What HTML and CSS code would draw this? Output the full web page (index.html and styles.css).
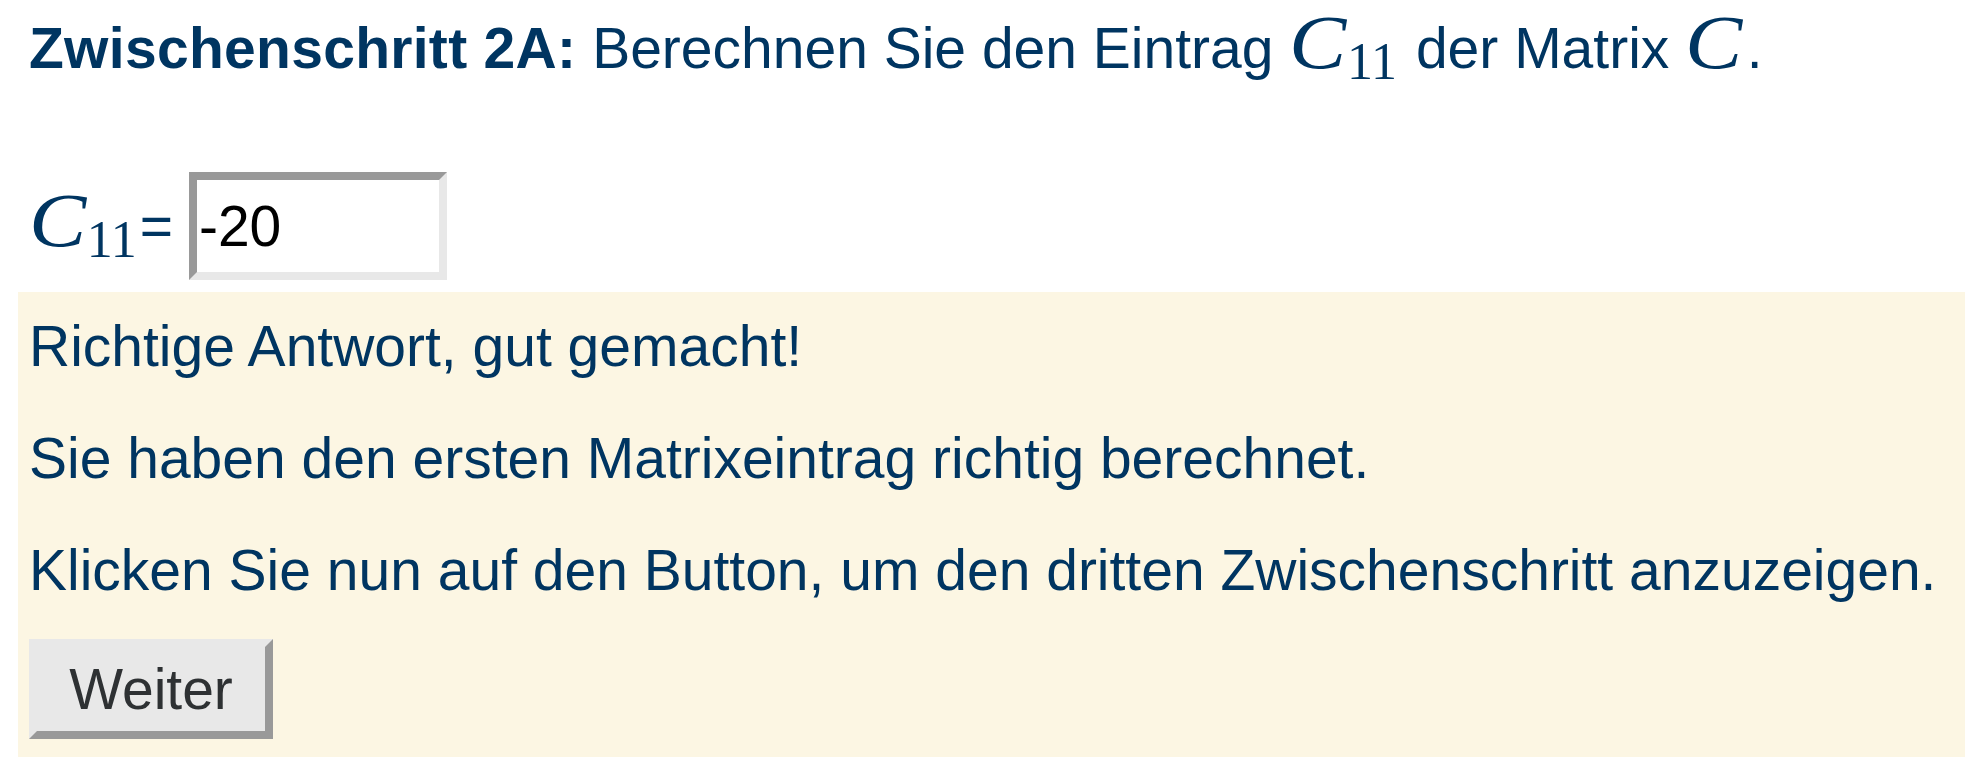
FILE: index.html
```html
<!DOCTYPE html>
<html lang="de">
<head>
<meta charset="utf-8">
<title>Zwischenschritt 2A</title>
<link rel="stylesheet" href="styles.css">
</head>
<body>
<div class="page">
  <div class="title"><b class="label">Zwischenschritt 2A:</b> Berechnen Sie den Eintrag <span class="math"><i class="mi">C</i><span class="msub msub-inline">11</span></span> der Matrix <span class="math"><i class="mi mi-end">C</i></span>.</div>
  <div class="answer-row"><span class="math"><i class="mi">C</i><span class="msub">11</span></span><span class="eq">=</span> <input class="field" type="text" value="-20"></div>
  <div class="feedback">
    <p class="msg">Richtige Antwort, gut gemacht!</p>
    <p class="msg">Sie haben den ersten Matrixeintrag richtig berechnet.</p>
    <p class="msg">Klicken Sie nun auf den Button, um den dritten Zwischenschritt anzuzeigen.</p>
    <button class="btn" type="button">Weiter</button>
  </div>
</div>
</body>
</html>
```

FILE: styles.css
```css
html, body {
  margin: 0;
  padding: 0;
  background: #ffffff;
}

body {
  font-family: "Liberation Sans", Arial, sans-serif;
  font-size: 57px;
  color: #003561;
}

.page {
  padding: 0 23px 0 18px;
}

.title {
  padding: 15px 0 0 11px;
  line-height: 66px;
  white-space: nowrap;
}

.label {
  font-weight: bold;
  letter-spacing: 0.3px;
}

.math {
  white-space: nowrap;
}

.mi {
  display: inline-block;
  font-family: "Liberation Serif", "Times New Roman", serif;
  font-style: italic;
  font-size: 76px;
  line-height: 50px;
  transform: scaleX(1.13);
  transform-origin: 0 50%;
  margin-right: 7px;
}

.mi-end {
  margin-right: 11px;
}

.msub {
  font-family: "Liberation Serif", "Times New Roman", serif;
  font-size: 52px;
  line-height: 30px;
  vertical-align: -11px;
}

.msub-inline {
  margin-right: 3px;
}

.answer-row {
  margin-top: 91px;
  padding-left: 11px;
  line-height: 66px;
  white-space: nowrap;
}

.eq {
  margin-left: 3px;
}

.field {
  box-sizing: border-box;
  width: 258px;
  height: 108px;
  margin: 0;
  padding: 0 0 0 2px;
  border-style: solid;
  border-width: 8px;
  border-color: #999999 #e8e8e8 #e8e8e8 #999999;
  background: #ffffff;
  font-family: "Liberation Sans", Arial, sans-serif;
  font-size: 57px;
  color: #000000;
  outline: none;
}

.feedback {
  margin-top: 12px;
  background: #fcf6e3;
  padding: 21px 9px 40px 11px;
}

.msg {
  margin: 0 0 46px 0;
  line-height: 66px;
  white-space: nowrap;
}

.msg:last-of-type {
  margin-bottom: 36px;
}

.btn {
  display: block;
  box-sizing: border-box;
  width: 244px;
  height: 100px;
  margin: 0;
  padding: 0;
  border-style: solid;
  border-width: 8px;
  border-color: #e8e8e8 #999999 #999999 #e8e8e8;
  background: #e8e8e8;
  font-family: "Liberation Sans", Arial, sans-serif;
  font-size: 57px;
  color: #2e3133;
  cursor: pointer;
}
```
